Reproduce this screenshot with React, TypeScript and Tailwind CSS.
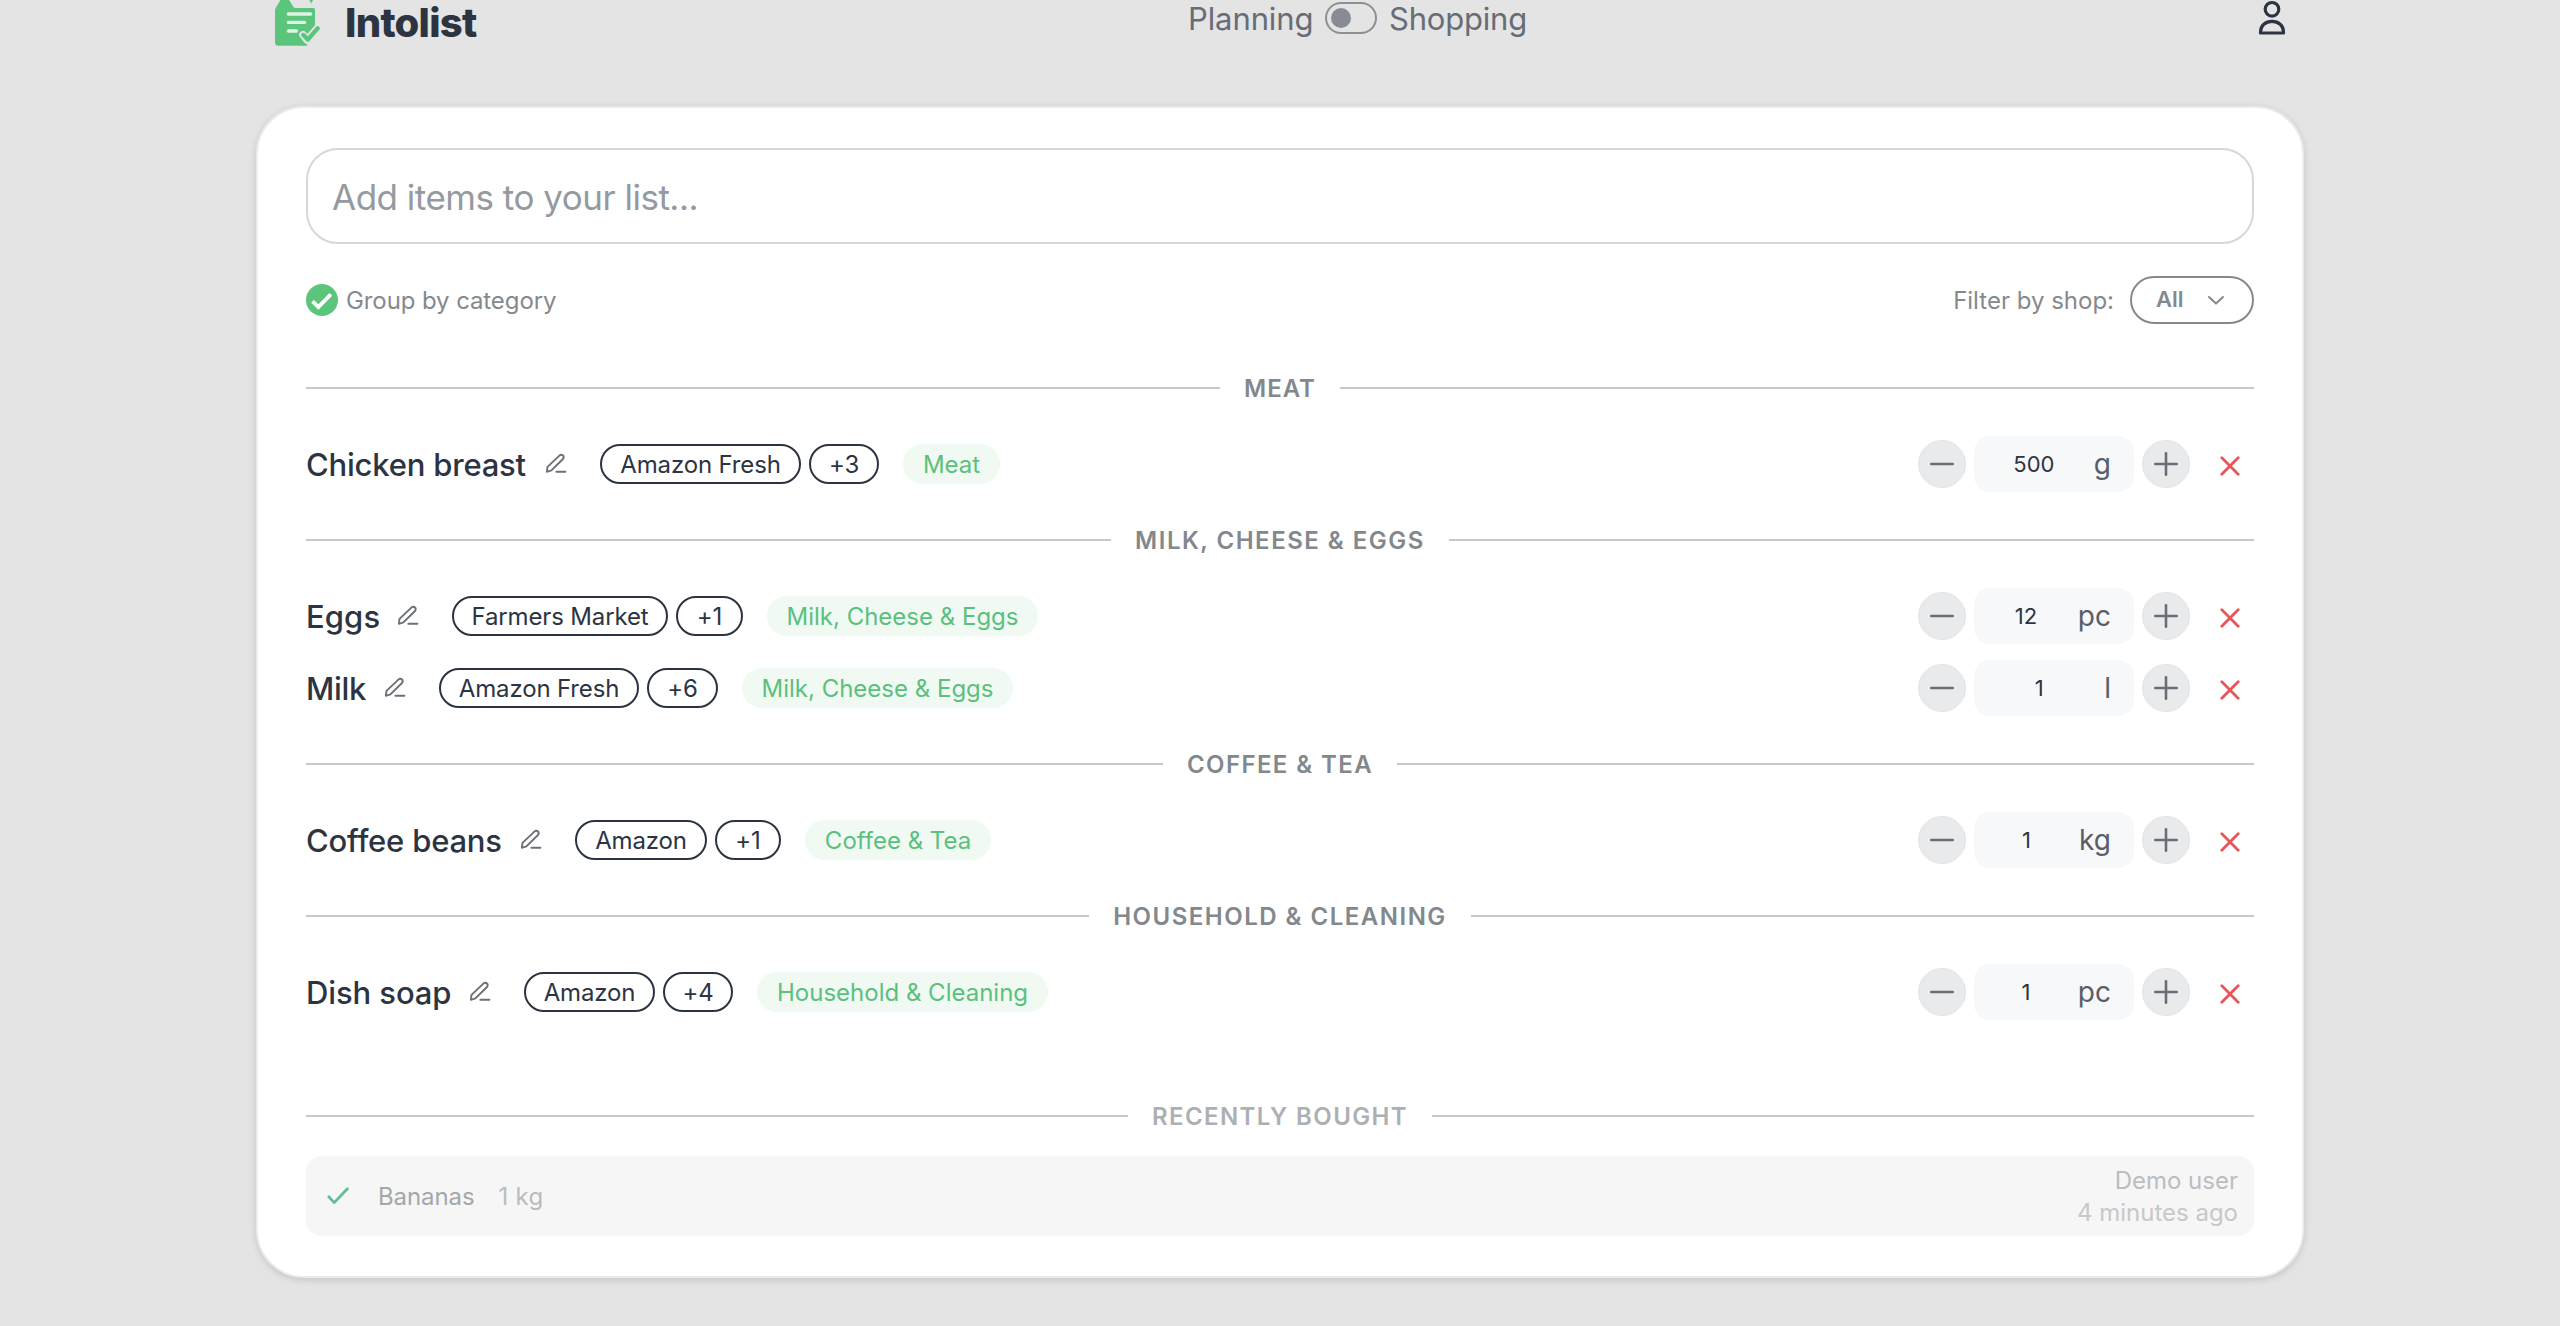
import type { ReactNode } from "react";

type Pill = { label: string; width: string };
type Item = {
  name: string;
  nameWidth: string;
  nameTracking: string;
  shops: Pill[];
  category: Pill;
  quantity: string;
  unit: string;
};
type Group = { title: string; tracking: string; items: Item[] };

const groups: Group[] = [
  {
    title: "MEAT",
    tracking: "tracking-[1px]",
    items: [
      {
        name: "Chicken breast",
        nameWidth: "w-[294px]",
        nameTracking: "tracking-[-0.2px]",
        shops: [
          { label: "Amazon Fresh", width: "w-[201px]" },
          { label: "+3", width: "w-[70px]" },
        ],
        category: { label: "Meat", width: "w-[97px]" },
        quantity: "500",
        unit: "g",
      },
    ],
  },
  {
    title: "MILK, CHEESE & EGGS",
    tracking: "tracking-[1.5px]",
    items: [
      {
        name: "Eggs",
        nameWidth: "w-[146px]",
        nameTracking: "tracking-[0.1px]",
        shops: [
          { label: "Farmers Market", width: "w-[216px]" },
          { label: "+1", width: "w-[67px]" },
        ],
        category: { label: "Milk, Cheese & Eggs", width: "w-[271px]" },
        quantity: "12",
        unit: "pc",
      },
      {
        name: "Milk",
        nameWidth: "w-[133px]",
        nameTracking: "tracking-[-0.3px]",
        shops: [
          { label: "Amazon Fresh", width: "w-[200px]" },
          { label: "+6", width: "w-[71px]" },
        ],
        category: { label: "Milk, Cheese & Eggs", width: "w-[271px]" },
        quantity: "1",
        unit: "l",
      },
    ],
  },
  {
    title: "COFFEE & TEA",
    tracking: "tracking-[1.4px]",
    items: [
      {
        name: "Coffee beans",
        nameWidth: "w-[269px]",
        nameTracking: "tracking-[-0.2px]",
        shops: [
          { label: "Amazon", width: "w-[132px]" },
          { label: "+1", width: "w-[66px]" },
        ],
        category: { label: "Coffee & Tea", width: "w-[186px]" },
        quantity: "1",
        unit: "kg",
      },
    ],
  },
  {
    title: "HOUSEHOLD & CLEANING",
    tracking: "tracking-[1.5px]",
    items: [
      {
        name: "Dish soap",
        nameWidth: "w-[218px]",
        nameTracking: "tracking-[-0.1px]",
        shops: [
          { label: "Amazon", width: "w-[131px]" },
          { label: "+4", width: "w-[70px]" },
        ],
        category: { label: "Household & Cleaning", width: "w-[291px]" },
        quantity: "1",
        unit: "pc",
      },
    ],
  },
];

function Logo() {
  return (
    <svg width="48" height="46" viewBox="0 0 48 46" fill="none">
      <path
        d="M3 10.5Q3 9 4 7.5L8.5 0H17L20.5 5.5Q21.5 8 23.5 8H41.5Q43 8 43 9.5V29L33 40L35.5 45.7H6.5Q3 45.7 3 42.2Z"
        fill="#5bc57c"
      />
      <path d="M37.3 0H41L39.2 3.6Z" fill="#5bc57c" />
      <path d="M16.4 14H38.6M16.4 22.4H32.6M16.4 31H24.6" stroke="#dff3e4" strokeWidth="3.4" strokeLinecap="round" />
      <path d="M31 34.8L35 40L45.6 28" stroke="#e3e5e3" strokeWidth="7.6" strokeLinecap="round" strokeLinejoin="round" />
      <path d="M30 34L36 44.5" stroke="#e3e5e3" strokeWidth="1.6" strokeLinecap="round" />
      <path d="M31.4 35L35.8 39.6L45.6 28.4" stroke="#5bc57c" strokeWidth="4.4" strokeLinecap="round" strokeLinejoin="round" />
    </svg>
  );
}

function UserIcon() {
  return (
    <svg width="28" height="36" viewBox="0 0 28 36" fill="none" stroke="#2c3442" strokeWidth="3.2">
      <circle cx="14" cy="9.3" r="6.8" />
      <path d="M2.5 33V32C2.5 25.6 7.6 21.4 14 21.4S25.5 25.6 25.5 32V33Z" strokeLinejoin="round" />
    </svg>
  );
}

function PencilIcon() {
  return (
    <svg
      className="mr-8 shrink-0"
      width="24"
      height="24"
      viewBox="0 0 24 24"
      fill="none"
      stroke="#6c7076"
      strokeWidth="1.9"
      strokeLinecap="round"
      strokeLinejoin="round"
    >
      <path d="M2.9 19.8L3.5 14.9L15.4 3.6Q17.4 2.1 19 3.5Q20.4 5.1 19 7L7.4 18.4Z" />
      <path d="M12.4 19.8H21.4" />
    </svg>
  );
}

function Divider({ tracking, className, children }: { tracking: string; className: string; children: ReactNode }) {
  return (
    <div className={`flex items-center gap-6 text-2xl font-semibold ${className}`}>
      <div className="h-0.5 flex-1 bg-[#c8c9cb]" />
      <span className={`pt-0.5 ${tracking}`}>{children}</span>
      <div className="h-0.5 flex-1 bg-[#c8c9cb]" />
    </div>
  );
}

function StepButton({ plus }: { plus?: boolean }) {
  return (
    <button className="flex size-12 items-center justify-center rounded-full border border-[#e2e3e5] bg-[#e8eaeb]">
      <svg width="24" height="24" viewBox="0 0 24 24" stroke="#6a6e76" strokeWidth="2.6" strokeLinecap="round">
        <path d="M1.3 12H22.7" />
        {plus && <path d="M12 1.3V22.7" />}
      </svg>
    </button>
  );
}

function ItemRow({ item }: { item: Item }) {
  return (
    <div className="flex h-14 items-center">
      <div className={`flex items-center justify-between ${item.nameWidth}`}>
        <span className={`pt-0.5 text-[31px] font-[550] whitespace-nowrap text-[#2c3442] ${item.nameTracking}`}>
          {item.name}
        </span>
        <PencilIcon />
      </div>
      <div className="flex gap-2">
        {item.shops.map((shop) => (
          <span
            key={shop.label}
            className={`flex h-10 items-center justify-center rounded-full border-2 border-[#2c3442] pt-0.5 text-2xl tracking-[-0.15px] whitespace-nowrap text-[#2c3442] ${shop.width}`}
          >
            {shop.label}
          </span>
        ))}
      </div>
      <span
        className={`ml-6 flex h-10 items-center justify-center rounded-full bg-[#f0faf3] pt-0.5 text-2xl whitespace-nowrap text-[#5bc07e] ${item.category.width}`}
      >
        {item.category.label}
      </span>
      <div className="ml-auto flex items-center gap-2">
        <StepButton />
        <div className="flex h-14 w-40 items-center rounded-2xl bg-[#f7f8fa] pr-[23px]">
          <span className="flex-1 pt-px text-center text-[22px] text-[#2c3442]">{item.quantity}</span>
          <span className="text-[28px] text-[#575e69]">{item.unit}</span>
        </div>
        <StepButton plus />
      </div>
      <button className="ml-4 flex size-12 items-center justify-center pt-1">
        <svg width="20" height="20" viewBox="0 0 20 20" stroke="#e6565a" strokeWidth="2.8" strokeLinecap="round">
          <path d="M1.8 1.8L18.2 18.2M18.2 1.8L1.8 18.2" />
        </svg>
      </button>
    </div>
  );
}

export default function App() {
  return (
    <div className="h-[1326px] overflow-hidden bg-[#e4e4e4] font-['Inter',sans-serif]">
      <div className="mx-auto w-[2048px]">
        <header className="flex h-[106px] items-start">
          <div className="flex h-[46px] w-[932px] items-center pl-4">
            <Logo />
            <span className="ml-[25px] text-[40px] leading-none font-extrabold tracking-[-0.72px] text-[#2c3442]">
              Intolist
            </span>
          </div>
          <div className="flex h-[37px] items-center text-[31px] leading-none text-[#676d76]">
            <span className="w-[137px] pb-px tracking-[-0.1px]">Planning</span>
            <div className="mb-px flex h-8 w-[52px] items-center rounded-full border-2 border-[#8b8f96] pl-1">
              <div className="size-5 rounded-full bg-[#878c94]" />
            </div>
            <span className="ml-3 pb-px tracking-[-0.2px]">Shopping</span>
          </div>
          <button className="mr-[18px] ml-auto">
            <UserIcon />
          </button>
        </header>

        <main className="rounded-[48px] border-2 border-[#ebebeb] bg-white px-12 py-10 shadow-[0_2px_7px_rgba(0,0,0,0.14)]">
          <input
            className="block h-24 w-full rounded-[32px] border-2 border-[#d5d7d9] px-6 pt-0.5 text-[35px] tracking-[-0.5px] placeholder:text-[#949a9f]"
            placeholder="Add items to your list..."
          />
          <div className="mt-8 flex h-12 items-center text-2xl text-[#85898e]">
            <svg width="32" height="32" viewBox="0 0 32 32" fill="none">
              <circle cx="16" cy="16" r="16" fill="#5bc57c" />
              <path d="M6.5 17.4L12.4 23L24.8 10.4" stroke="#fff" strokeWidth="3.8" />
            </svg>
            <span className="ml-2 pt-0.5 tracking-[-0.1px]">Group by category</span>
            <span className="ml-auto pt-0.5">Filter by shop:</span>
            <button className="ml-4 flex h-12 w-[124px] items-center rounded-full border-2 border-[#85888d] pl-6">
              <span className="text-[22px] font-semibold">All</span>
              <svg
                className="ml-[23px]"
                width="18"
                height="12"
                viewBox="0 0 18 12"
                fill="none"
                stroke="#85888d"
                strokeWidth="2"
                strokeLinecap="round"
                strokeLinejoin="round"
              >
                <path d="M2 3L9 9.6L16 3" />
              </svg>
            </button>
          </div>

          <div className="mt-4">
            {groups.map((group) => (
              <section key={group.title}>
                <Divider tracking={group.tracking} className="h-24 text-[#83888d]">
                  {group.title}
                </Divider>
                <div className="flex flex-col gap-4">
                  {group.items.map((item) => (
                    <ItemRow key={item.name} item={item} />
                  ))}
                </div>
              </section>
            ))}
          </div>

          <Divider tracking="tracking-[1.4px]" className="mt-14 h-20 text-[#adb0b3]">
            RECENTLY BOUGHT
          </Divider>
          <div className="flex h-20 items-center rounded-2xl bg-[#f6f6f6] px-4 text-2xl">
            <svg
              className="ml-1"
              width="24"
              height="20"
              viewBox="0 0 24 20"
              fill="none"
              stroke="#62bf93"
              strokeWidth="2.8"
              strokeLinecap="round"
              strokeLinejoin="round"
            >
              <path d="M2.8 10.8L8.2 16.6L21.4 2.8" />
            </svg>
            <span className="ml-7 pt-0.5 tracking-[-0.1px] text-[#a4a7aa]">Bananas</span>
            <span className="ml-6 pt-0.5 tracking-[0.3px] text-[#b9bbbd]">1 kg</span>
            <div className="ml-auto flex flex-col items-end pt-0.5 leading-8">
              <span className="text-[#bbbdbf]">Demo user</span>
              <span className="text-[#c7c8ca]">4 minutes ago</span>
            </div>
          </div>
        </main>
      </div>
    </div>
  );
}
